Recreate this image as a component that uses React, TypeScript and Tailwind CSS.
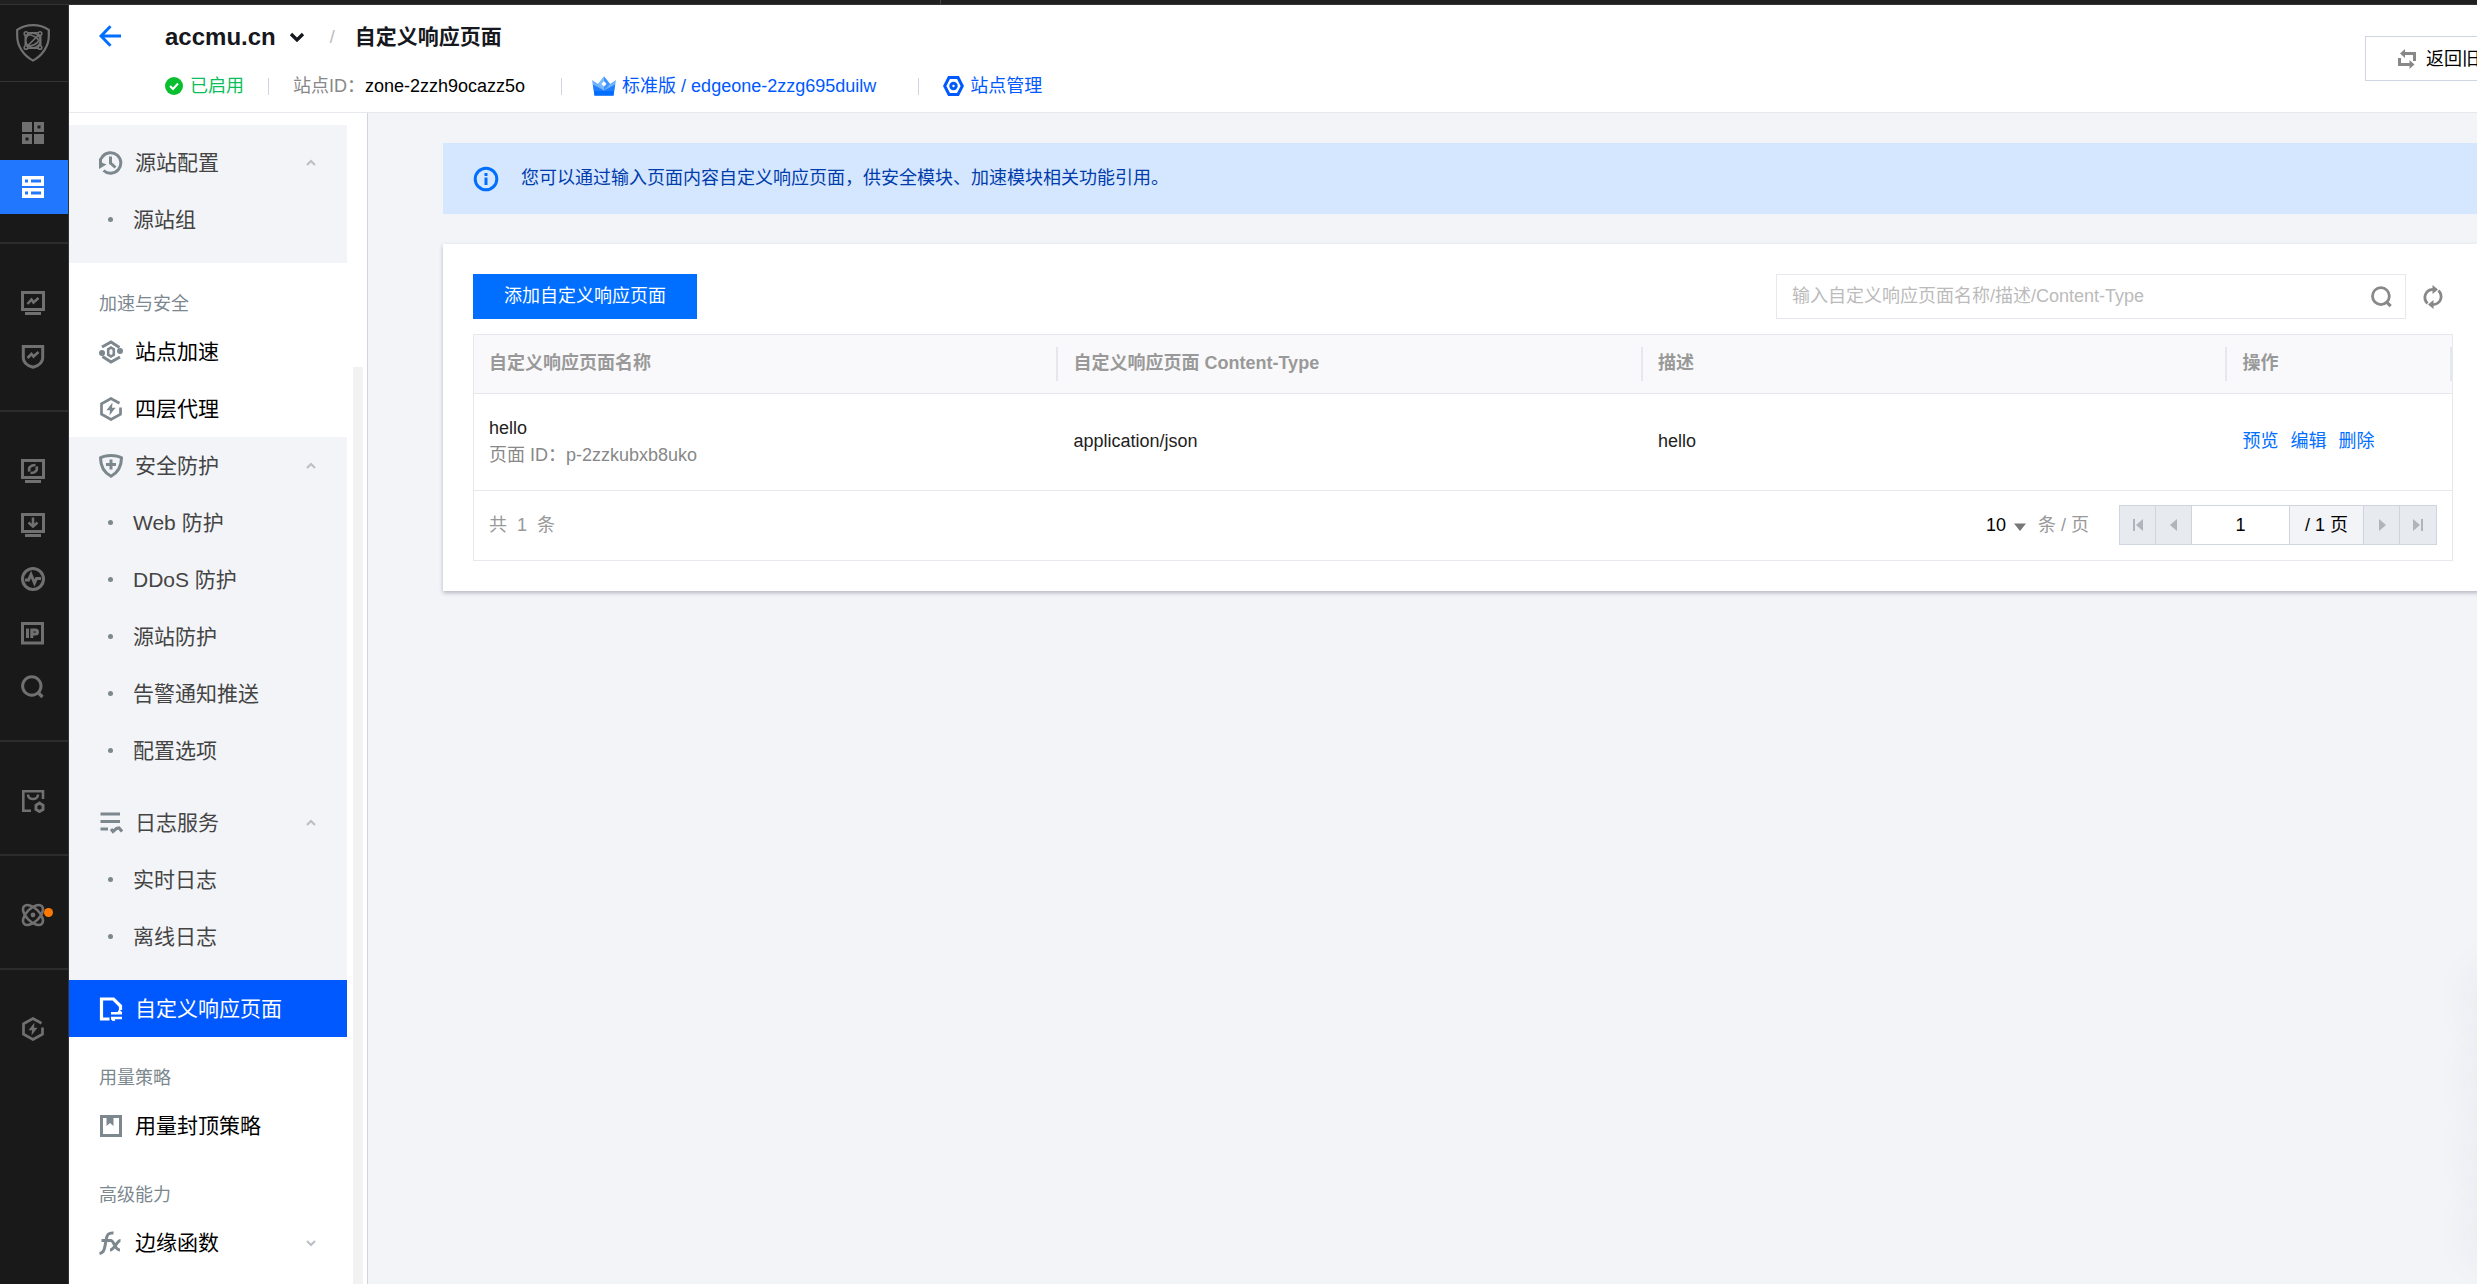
import React from "react";

type IconProps = { className?: string; children?: React.ReactNode };

function Icon({ className = "size-6", children }: IconProps) {
  return (
    <svg viewBox="0 0 24 24" className={className} fill="none" stroke="currentColor" strokeWidth="3" aria-hidden="true">
      {children}
    </svg>
  );
}

const Logo = () => (
  <svg viewBox="0 0 34 38" className="h-[38px] w-[34px]" fill="none" stroke="currentColor" aria-hidden="true">
    <path strokeWidth="2.2" d="M17 1.2C22.500 1.200 28.500 3 32.800 5.800V12C32.800 22 26.500 31.500 17 36.600C7.500 31.500 1.200 22 1.200 12V5.800C5.500 3 11.500 1.200 17 1.200Z" />
    <g strokeWidth="1.600">
      <circle cx="10" cy="9.500" r="1.800" />
      <circle cx="24" cy="9.500" r="1.800" />
      <circle cx="10" cy="23.500" r="1.800" />
      <circle cx="24" cy="23.500" r="1.800" />
      <path d="M12 8.800H22M12 24.200H22M9.300 11.500V21.500M24.700 11.500V21.500" />
      <circle cx="17" cy="16.500" r="7.300" />
      <path d="M11 10.500C17 11 21 13.500 23 16.500C21 19.500 17 22 11 22.500M23 10.500L11.500 22" />
    </g>
  </svg>
);
const Overview = () => (
  <Icon>
    <g stroke="none" fill="currentColor">
      <path d="M1 1h10v10H1zM13 13h10v10H13z" />
      <path fillRule="evenodd" d="M13 1h10v10H13zM16.500 4.500v3h3v-3zM1 13h10v10H1zM4.500 16.500v3h3v-3z" />
    </g>
  </Icon>
);
const SiteList = () => (
  <Icon>
    <path stroke="none" fill="currentColor" fillRule="evenodd" d="M1 1h22v10H1zM4 4.500v3h3v-3zM10 4.500v3h10v-3zM1 13h22v10H1zM4 16.500v3h3v-3zM10 16.500v3h10v-3z" />
  </Icon>
);
const Screen = ({ children }: { children: React.ReactNode }) => (
  <Icon>
    <path d="M1.500 1.500H22.500V18.500H1.500Z" />
    <path stroke="none" fill="currentColor" d="M4 21h16v3H4z" />
    {children}
  </Icon>
);
const Monitor = () => (
  <Screen>
    <path strokeWidth="2.600" d="M6.500 13L10.500 8.500L12.500 11.500L17.500 7" />
  </Screen>
);
const ShieldTrend = () => (
  <Icon>
    <path d="M2.300 1.500H21.700V13C21.700 17.500 17 20.800 12 22.300C7 20.800 2.300 17.500 2.300 13Z" />
    <path strokeWidth="2.600" d="M6.500 13L10.500 9L12.500 11.500L17.500 7" />
  </Icon>
);
const ScreenRefresh = () => (
  <Screen>
    <path strokeWidth="2.600" d="M8.500 12.500C7 9 9.500 6 14.500 6M15.500 7.500C17 11 14.500 14 9.500 14" />
  </Screen>
);
const ScreenDownload = () => (
  <Screen>
    <path strokeWidth="2.600" d="M12 4.500V13M7.500 9.500L12 13.600L16.500 9.500" />
  </Screen>
);
const Pulse = () => (
  <Icon>
    <circle cx="12" cy="12" r="10.500" />
    <path d="M4 13H7.500L10 7.500L13.500 16L15.500 11.500H20" />
  </Icon>
);
const IpBox = () => (
  <Icon>
    <path d="M1.500 2.500H21.500V22H1.500Z" />
    <path d="M6.500 7.500V17M10.800 17V9H14.500C16 9 16.500 10 16.500 11C16.500 12 16 13 14.500 13H11" />
  </Icon>
);
const SearchIcon = ({ className }: { className?: string }) => (
  <Icon className={className}>
    <circle cx="10.800" cy="11" r="9.200" />
    <path strokeWidth="3.400" d="M16.500 17L21.500 22" />
  </Icon>
);
const PanelGear = () => (
  <Icon>
    <path strokeWidth="2.600" d="M22 10V2.300H2.300V21.700H10" />
    <path strokeWidth="2.600" d="M7 5.500C7 11.500 17 11.500 17 5.500" />
    <path d="M18.500 14L22 16.300V20.500L18.500 22.500L15 20.500V16.300Z" />
  </Icon>
);
const Atom = () => (
  <Icon>
    <g strokeWidth="2.600">
      <ellipse cx="12" cy="12" rx="12.500" ry="6.500" transform="rotate(45 12 12)" />
      <ellipse cx="12" cy="12" rx="12.500" ry="6.500" transform="rotate(-45 12 12)" />
    </g>
    <circle cx="12" cy="12" r="2.400" fill="currentColor" stroke="none" />
  </Icon>
);
const HexBolt = () => (
  <Icon>
    <path strokeWidth="2.700" d="M21.500 10.500V17.300L12 22.500L2.500 17.300V6.700L12 1.500L20.500 6.200" />
    <path stroke="none" fill="currentColor" d="M13.500 5.500L7.500 13.200H11L10.500 18.500L16.500 10.800H13Z" />
  </Icon>
);
const ClockBack = () => (
  <Icon>
    <path d="M3.500 5.500A10.300 10.300 0 1 1 4.500 19.500" />
    <path d="M1.500 14V8.500L4 5" />
    <path stroke="none" fill="currentColor" d="M0 10.500L7.500 13.500L0 18Z" />
    <path d="M11.500 5.500V12L16.500 16.500" />
  </Icon>
);
const HexSpeed = () => (
  <Icon>
    <path d="M3 7L12 2L20.500 7.500M21 17L12 22L3.500 16.500" />
    <path d="M12 7.500L14.800 9.300V14.700L12 16.500L9.200 14.700V9.300Z" strokeWidth="2.600" />
    <circle cx="3" cy="13" r="3" fill="currentColor" stroke="none" />
    <circle cx="21" cy="11" r="3" fill="currentColor" stroke="none" />
  </Icon>
);
const ShieldPlus = () => (
  <Icon>
    <path d="M12 1.500C16 1.500 20 2.300 22.500 3.800C22.500 12 19 18.500 12 22.300C5 18.500 1.500 12 1.500 3.800C4 2.300 8 1.500 12 1.500Z" />
    <path d="M12 5.500V15.500M7 10.500H17" />
  </Icon>
);
const LogLines = () => (
  <Icon>
    <path d="M1.500 3H21M1.500 10.500H21M1.500 18H9M12 18L14 20.500L17.500 17.500L20 17L23 20.500" />
  </Icon>
);
const PageSwap = () => (
  <Icon>
    <path strokeWidth="3.200" d="M10.500 22H2.500V2H14.500L21.500 9V13" />
    <path d="M12 16.300H23M12 21H23M19.500 13.500L22.500 16.500M15.500 24L12.500 21" strokeWidth="2.500" />
  </Icon>
);
const Bookmark = () => (
  <Icon>
    <path d="M2.500 2.500H21.500V21.500H2.500Z" />
    <path stroke="none" fill="currentColor" d="M7.500 3H14.500V12L11 9L7.500 12Z" />
  </Icon>
);
const Fx = () => (
  <Icon>
    <path d="M0.500 22.500C4 22 5 20 6 15L7.500 7C8.300 3 10 1.500 14.500 2M2.500 9.500H12" />
    <path d="M12 9.500C15 9.500 15.500 19 21 19M21.500 9.500C18 9.500 15 19 11 19" />
  </Icon>
);
const Swap = () => (
  <svg viewBox="0 0 18 20" className="h-5 w-[18px]" aria-hidden="true" fill="currentColor">
    <path d="M2 4.500L7 0V3H18V12H15V6H7V9ZM16.500 15.500L11.500 20V17H0V9H3V14H11.500V11Z" />
  </svg>
);
const Refresh = () => (
  <Icon>
    <path d="M6.500 18.500C1.500 13 4 5 12 4.300M17.500 5.500C22.500 11 20 19 12 19.700" strokeWidth="2.800" />
    <path stroke="none" fill="currentColor" d="M11.500 0L17 4.500L11.500 9ZM12.500 24L7 19.500L12.500 15Z" />
  </Icon>
);
const Chevron = ({ up = false, className = "size-3" }: { up?: boolean; className?: string }) => (
  <svg viewBox="0 0 12 12" className={className} fill="none" stroke="currentColor" strokeWidth="2.200" aria-hidden="true">
    <path d={up ? "M2 8L6 4L10 8" : "M2 4L6 8L10 4"} />
  </svg>
);

const railGroups: { label: string; icon: React.ReactNode; active?: boolean; dot?: boolean }[][] = [
  [
    { label: "服务总览", icon: <Overview /> },
    { label: "站点列表", icon: <SiteList />, active: true },
  ],
  [
    { label: "数据分析", icon: <Monitor /> },
    { label: "安全分析", icon: <ShieldTrend /> },
  ],
  [
    { label: "刷新预热", icon: <ScreenRefresh /> },
    { label: "日志下载", icon: <ScreenDownload /> },
    { label: "拨测", icon: <Pulse /> },
    { label: "IP 查询", icon: <IpBox /> },
    { label: "诊断", icon: <SearchIcon /> },
  ],
  [{ label: "套餐管理", icon: <PanelGear /> }],
  [{ label: "实验室", icon: <Atom />, dot: true }],
  [{ label: "四层代理", icon: <HexBolt /> }],
];

function Rail() {
  return (
    <nav aria-label="产品导航" className="flex w-[69px] shrink-0 flex-col border-r border-[#333] bg-[#191919] text-[#707070]">
      <a href="#home" aria-label="首页" className="flex h-[77px] items-center border-b border-[#333] pl-4">
        <Logo />
      </a>
      {railGroups.map((group, i) => (
        <div key={i} className={i === 0 ? "pt-6" : "border-t-2 border-[#2c2c2c] pt-8"}>
          {group.map((item) => (
            <button
              key={item.label}
              type="button"
              aria-label={item.label}
              className={
                item.active
                  ? "flex h-[54px] w-full items-center bg-[#2277ff] pl-[21px] text-white"
                  : "relative flex h-[54px] w-full items-center pl-[21px]"
              }
            >
              {item.icon}
              {item.dot && <span className="absolute top-5 left-11 size-[9px] rounded-full bg-[#ff7800]" />}
            </button>
          ))}
          <div className={i === 0 ? "h-7" : "h-[26px]"} />
        </div>
      ))}
    </nav>
  );
}

function Item({ icon, label, tone = "text-black", arrow }: { icon: React.ReactNode; label: string; tone?: string; arrow?: "up" | "down" }) {
  return (
    <a href="#menu" className="flex h-[57px] items-center pr-[30px] pl-[30px]">
      <span className="text-[#7c878e]">{icon}</span>
      <span className={`ml-3 flex-1 ${tone}`}>{label}</span>
      {arrow && (
        <span className="text-[#bcc0c6]">
          <Chevron up={arrow === "up"} />
        </span>
      )}
    </a>
  );
}
const Sub = ({ label }: { label: string }) => (
  <a href="#menu" className="flex h-[57px] items-center pl-[39px] text-[#444]">
    <span className="mr-5 size-[5px] rounded-full bg-[#7c878e]" />
    {label}
  </a>
);
const GroupTitle = ({ children }: { children: React.ReactNode }) => (
  <h3 className="h-[60px] pt-7 pl-[30px] text-lg leading-[27px] text-[#7c878e]">{children}</h3>
);

function Sidebar() {
  return (
    <aside className="flex w-[299px] shrink-0 border-r border-[#cfd5de] bg-white">
      <nav aria-label="站点菜单" className="w-[278px] pt-3 text-[21px] leading-[30px]">
        <div className="bg-[#f3f4f8] pt-[9px] pb-[15px]">
          <Item icon={<ClockBack />} label="源站配置" tone="text-[#444]" arrow="up" />
          <Sub label="源站组" />
        </div>
        <GroupTitle>加速与安全</GroupTitle>
        <Item icon={<HexSpeed />} label="站点加速" />
        <Item icon={<HexBolt />} label="四层代理" />
        <div className="bg-[#f3f4f8] pb-[15px]">
          <Item icon={<ShieldPlus />} label="安全防护" tone="text-[#444]" arrow="up" />
          <Sub label="Web 防护" />
          <Sub label="DDoS 防护" />
          <Sub label="源站防护" />
          <Sub label="告警通知推送" />
          <Sub label="配置选项" />
        </div>
        <div className="bg-[#f3f4f8] pb-[15px]">
          <Item icon={<LogLines />} label="日志服务" tone="text-[#444]" arrow="up" />
          <Sub label="实时日志" />
          <Sub label="离线日志" />
        </div>
        <a href="#menu" aria-current="page" className="flex h-[57px] items-center bg-[#0059ff] pl-[30px] text-white">
          <PageSwap />
          <span className="ml-3">自定义响应页面</span>
        </a>
        <GroupTitle>用量策略</GroupTitle>
        <Item icon={<Bookmark />} label="用量封顶策略" />
        <GroupTitle>高级能力</GroupTitle>
        <Item icon={<Fx />} label="边缘函数" arrow="down" />
      </nav>
      <div className="mt-[254px] ml-1.5 w-2.5 bg-[#f2f2f2]" />
    </aside>
  );
}

const Divider = ({ className }: { className: string }) => <span className={`h-[17px] w-px bg-[#cfd5de] ${className}`} />;

function Header() {
  return (
    <header className="flex h-[108px] shrink-0 items-start border-b border-[#e5e8ed] bg-white pr-[30px] pl-[30px]">
      <a href="#back" aria-label="返回" className="mt-5 text-[#006eff]">
        <svg viewBox="0 0 22 22" className="size-[22px]" fill="none" stroke="currentColor" strokeWidth="3" aria-hidden="true">
          <path d="M11.500 1.200L2 11L11.500 20.800M2 11H22" />
        </svg>
      </a>
      <div className="ml-11 flex-1">
        <div className="flex h-[63px] items-center text-black">
          <button type="button" className="flex items-center text-2xl font-bold text-[#16181d]">
            accmu.cn
            <Chevron className="ml-3 size-[18px]" />
          </button>
          <span className="ml-6 text-lg text-[#bbb]">/</span>
          <h1 className="ml-5 text-[21px] font-bold text-[#16181d]">自定义响应页面</h1>
        </div>
        <div className="flex h-9 items-center text-lg">
          <svg viewBox="0 0 18 18" className="mr-[7px] size-[18px]" aria-hidden="true">
            <circle cx="9" cy="9" r="9" fill="#0abf2f" />
            <path d="M5 9L8 12L13 6.500" fill="none" stroke="#fff" strokeWidth="2" />
          </svg>
          <span className="text-[#0abf5b]">已启用</span>
          <Divider className="mr-6 ml-6" />
          <span className="text-[#888]">站点ID：</span>
          <span className="text-black">zone-2zzh9ocazz5o</span>
          <Divider className="mr-[30px] ml-9" />
          <a href="#plan" className="flex items-center text-[#0059ff]">
            <svg viewBox="0 0 24 20" className="mr-1.5 h-5 w-6" aria-hidden="true">
              <path d="M0 4L6 8L12 0.500L18 8L24 4L21.500 19.500H2.500Z" fill="#6fb0ff" />
              <path d="M0.800 8.500L12 14.500L23.200 8.500L21.500 19.500H2.500Z" fill="#1f7dff" />
              <path d="M2 15H22L21.500 19.500H2.500Z" fill="#006eff" />
              <path d="M12 0.500L18 8L12 14.500L6 8Z" fill="#7dbbff" />
              <path d="M12 0.500L18 8L12 14.500Z" fill="#3d93ff" />
              <path d="M12 5L14.500 8L12 10.500L9.500 8Z" fill="#fff" />
            </svg>
            标准版 / edgeone-2zzg695duilw
          </a>
          <Divider className="mr-6 ml-[42px]" />
          <a href="#manage" className="flex items-center text-[#0059ff]">
            <svg viewBox="0 0 21 20" className="mr-1.5 h-5 w-[21px]" fill="none" stroke="currentColor" strokeWidth="3" aria-hidden="true">
              <path d="M6 1.600H15L19.300 10L15 18.400H6L1.700 10Z" />
              <circle cx="10.500" cy="10" r="2.700" />
            </svg>
            站点管理
          </a>
        </div>
      </div>
      <button type="button" className="mt-[31px] flex h-[45px] items-center border border-[#cfd5e2] pr-[29px] pl-8 text-lg text-black">
        <span className="mr-2.5 text-[#888]">
          <Swap />
        </span>
        返回旧版
      </button>
    </header>
  );
}

const columns = ["自定义响应页面名称", "自定义响应页面 Content-Type", "描述", "操作"];

function Pager() {
  const step = "flex h-full w-9 items-center justify-center bg-[#e7eaef] text-[#b0b5bb]";
  return (
    <div className="flex h-10 divide-x divide-[#cfd5de] border border-[#cfd5de]">
      <button type="button" aria-label="首页" className={step}>
        <svg viewBox="0 0 12 14" className="h-3.5 w-3" fill="currentColor" aria-hidden="true">
          <path d="M1 1h2v12H1zM11 1v12L4 7z" />
        </svg>
      </button>
      <button type="button" aria-label="上一页" className={step}>
        <svg viewBox="0 0 12 14" className="h-3.5 w-3" fill="currentColor" aria-hidden="true">
          <path d="M9 1v12L2 7z" />
        </svg>
      </button>
      <input aria-label="页码" defaultValue="1" className="h-full w-[98px] bg-white text-center text-black outline-none" />
      <span className="flex h-full w-[74px] items-center justify-center bg-[#f3f4f7] text-black">/ 1 页</span>
      <button type="button" aria-label="下一页" className={step}>
        <svg viewBox="0 0 12 14" className="h-3.5 w-3" fill="currentColor" aria-hidden="true">
          <path d="M3 1v12L10 7z" />
        </svg>
      </button>
      <button type="button" aria-label="末页" className={step}>
        <svg viewBox="0 0 12 14" className="h-3.5 w-3" fill="currentColor" aria-hidden="true">
          <path d="M9 1h2v12H9zM1 1v12L8 7z" />
        </svg>
      </button>
    </div>
  );
}

function ResponsePages() {
  return (
    <section className="mt-[30px] bg-white p-[30px] shadow-[0_2px_4px_rgba(54,58,80,0.32)]">
      <div className="flex items-center">
        <button type="button" className="h-[45px] bg-[#006eff] px-[31px] text-white">
          添加自定义响应页面
        </button>
        <div className="ml-auto flex h-[45px] w-[630px] items-center border border-[#e5e8ed] pr-3 pl-[15px]">
          <input
            type="search"
            aria-label="搜索"
            placeholder="输入自定义响应页面名称/描述/Content-Type"
            className="min-w-0 flex-1 outline-none placeholder:text-[#bbb]"
          />
          <button type="button" aria-label="搜索" className="text-[#888]">
            <SearchIcon className="size-[22px]" />
          </button>
        </div>
        <button type="button" aria-label="刷新" className="mr-2 ml-[15px] text-[#888]">
          <Refresh />
        </button>
      </div>
      <div className="mt-[15px] border border-[#e5e8ed]">
        <table className="w-full table-fixed border-collapse text-left">
          <colgroup>
            <col className="w-[29.55%]" />
            <col className="w-[29.55%]" />
            <col className="w-[29.55%]" />
            <col />
          </colgroup>
          <thead>
            <tr className="h-[58px] border-b border-[#e5e8ed] bg-[#f9f9fb]">
              {columns.map((c) => (
                <th key={c} className="p-0 font-bold text-[#999]">
                  <div className="flex h-[34px] items-center border-r-2 border-[#e5e8ed] pl-[15px]">{c}</div>
                </th>
              ))}
            </tr>
          </thead>
          <tbody>
            <tr className="h-[97px] border-b border-[#e5e8ed] text-[#222]">
              <td className="pl-[15px]">
                <div>hello</div>
                <div className="text-[#888]">页面 ID：p-2zzkubxb8uko</div>
              </td>
              <td className="pl-[15px]">application/json</td>
              <td className="pl-[15px]">hello</td>
              <td className="pl-[15px]">
                <div className="flex gap-3 text-[#006eff]">
                  <a href="#preview">预览</a>
                  <a href="#edit">编辑</a>
                  <a href="#delete">删除</a>
                </div>
              </td>
            </tr>
          </tbody>
        </table>
        <div className="flex h-[69px] items-center px-[15px] text-[#999]">
          <span className="flex gap-2.5">
            <span>共</span>
            <span>1</span>
            <span>条</span>
          </span>
          <label className="ml-auto flex items-center">
            <span className="relative flex items-center">
              <select aria-label="每页条数" className="w-[52px] appearance-none text-black outline-none">
                <option>10</option>
              </select>
              <svg viewBox="0 0 12 8" className="pointer-events-none absolute right-3 mt-1 h-2 w-3 fill-[#777]" aria-hidden="true">
                <path d="M0 0.500h12L6 8z" />
              </svg>
            </span>
            条 / 页
          </label>
          <div className="ml-[30px]">
            <Pager />
          </div>
        </div>
      </div>
    </section>
  );
}

export default function App() {
  return (
    <div className="relative flex h-screen flex-col overflow-hidden bg-[#f3f4f8] font-['Liberation_Sans','Noto_Sans_CJK_SC',sans-serif] text-lg leading-[27px] font-normal">
      <div className="flex h-[5px] shrink-0 border-b border-[#333] bg-[#202020]">
        <div className="w-[38%] border-r border-[#444]" />
      </div>
      <div className="flex min-h-0 w-[calc(100%+81px)] flex-1">
        <Rail />
        <div className="flex min-w-0 flex-1 flex-col">
          <Header />
          <div className="flex min-h-0 flex-1">
            <Sidebar />
            <main className="min-w-0 flex-1 px-[75px] pt-[30px]">
              <div className="flex h-[71px] items-center bg-[#d5e7ff] pl-[30px] text-[#003cab]">
                <svg viewBox="0 0 26 26" className="mr-[22px] size-[26px]" fill="none" stroke="#006eff" strokeWidth="3" aria-hidden="true">
                  <circle cx="13" cy="13" r="10.800" />
                  <path d="M13 11.500V19M13 7V10" />
                </svg>
                您可以通过输入页面内容自定义响应页面，供安全模块、加速模块相关功能引用。
              </div>
              <ResponsePages />
            </main>
          </div>
        </div>
      </div>
      <div aria-hidden="true" className="absolute bottom-6 left-full flex flex-col gap-4">
        <span className="size-[60px] rounded-full shadow-[0_0_50px_rgba(54,58,80,0.09)]" />
        <span className="size-[60px] rounded-full shadow-[0_0_50px_rgba(54,58,80,0.09)]" />
        <span className="size-[60px] rounded-full shadow-[0_0_50px_rgba(54,58,80,0.09)]" />
        <span className="size-[60px] rounded-full shadow-[0_0_50px_rgba(54,58,80,0.09)]" />
      </div>
    </div>
  );
}
